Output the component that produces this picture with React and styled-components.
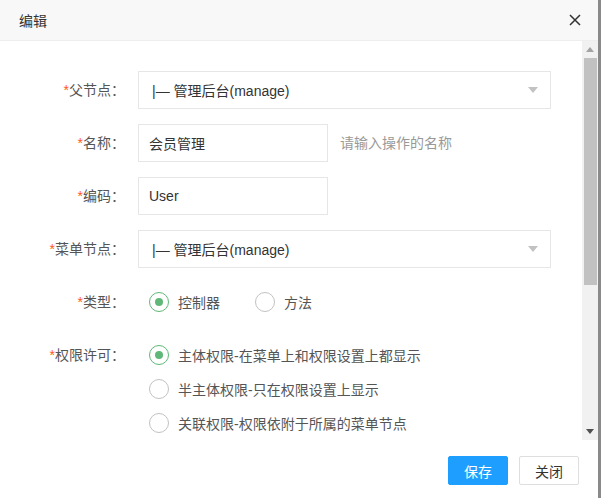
import React from 'react';
import styled, { createGlobalStyle } from 'styled-components';

const GlobalStyle = createGlobalStyle`
  html, body {
    margin: 0;
    padding: 0;
    background: #8a8a8a;
  }
  * {
    box-sizing: border-box;
  }
`;

const Dialog = styled.div`
  width: 598px;
  height: 498px;
  background: #fff;
  display: flex;
  flex-direction: column;
  font-family: "Liberation Sans", "Noto Sans CJK SC", sans-serif;
  font-size: 14px;
  color: #333;
`;

const Header = styled.div`
  height: 41px;
  flex: none;
  background: #f8f8f8;
  border-bottom: 1px solid #eee;
  display: flex;
  align-items: center;
  justify-content: space-between;
  padding: 0 16px 0 19px;
`;

const Title = styled.span`
  font-size: 14px;
  color: #333;
`;

const CloseButton = styled.button`
  border: 0;
  background: none;
  padding: 0;
  width: 14px;
  height: 14px;
  display: flex;
  align-items: center;
  justify-content: center;
  cursor: pointer;
`;

const Body = styled.div`
  height: 399px;
  flex: none;
  display: flex;
`;

const Content = styled.div`
  flex: 1;
  overflow: hidden;
  padding: 30px 31px 0 0;
`;

const ScrollBar = styled.div`
  width: 16px;
  flex: none;
  background: #f1f1f1;
  display: flex;
  flex-direction: column;
`;

const ScrollButton = styled.div`
  height: 17px;
  flex: none;
  display: flex;
  align-items: center;
  justify-content: center;
`;

const ScrollTrack = styled.div`
  flex: 1;
  padding: 0 1px 0 2px;
`;

const Thumb = styled.div`
  height: 227px;
  background: #c1c1c1;
`;

const FormItem = styled.div`
  display: flex;
  align-items: flex-start;
  margin-bottom: 15px;
`;

const Label = styled.label`
  width: 125px;
  flex: none;
  margin-right: 13px;
  padding: 9px 0;
  line-height: 20px;
  text-align: right;
  color: #555;
  font-size: 14px;
`;

const Star = styled.span`
  color: #ff5722;
`;

const Field = styled.div`
  height: 38px;
  width: ${p => (p.$wide ? '413px' : '190px')};
  border: 1px solid #e6e6e6;
  background: #fff;
  display: flex;
  align-items: center;
  padding-left: ${p => (p.$select ? '13px' : '10px')};
  padding-right: 12px;
  color: #333;
  font-size: 14px;
`;

const FieldText = styled.span`
  flex: 1;
  white-space: nowrap;
`;

const Caret = styled.i`
  width: 0;
  height: 0;
  border-left: 5px solid transparent;
  border-right: 5px solid transparent;
  border-top: 6px solid #c2c2c2;
`;

const Hint = styled.span`
  margin-left: 12px;
  line-height: 38px;
  color: #999;
  font-size: 14px;
`;

const RadioRow = styled.div`
  display: flex;
  align-items: center;
  height: 38px;
  padding-left: 11px;
  gap: 35px;
`;

const RadioColumn = styled.div`
  display: flex;
  flex-direction: column;
  gap: 4px;
  padding-top: 4px;
  padding-left: 11px;
`;

const Radio = styled.div`
  display: flex;
  align-items: center;
  height: 30px;
  gap: 9px;
  color: #555;
  font-size: 14px;
  cursor: pointer;
`;

const RadioIcon = styled.span`
  width: 20px;
  height: 20px;
  border-radius: 50%;
  border: 1.5px solid ${p => (p.$checked ? '#5fb878' : '#c2c2c2')};
  display: flex;
  align-items: center;
  justify-content: center;

  &::after {
    content: '';
    display: ${p => (p.$checked ? 'block' : 'none')};
    width: 8px;
    height: 8px;
    border-radius: 50%;
    background: #5fb878;
  }
`;

const Footer = styled.div`
  flex: 1;
  display: flex;
  justify-content: flex-end;
  align-items: flex-start;
  gap: 11px;
  padding: 16px 19px 0 0;
`;

const Button = styled.button`
  height: 29px;
  padding: 0 15px;
  border-radius: 2px;
  font-family: "Liberation Sans", "Noto Sans CJK SC", sans-serif;
  font-size: 14px;
  cursor: pointer;
  border: 1px solid ${p => (p.$primary ? '#1e9fff' : '#dedede')};
  background: ${p => (p.$primary ? '#1e9fff' : '#fff')};
  color: ${p => (p.$primary ? '#fff' : '#333')};
`;

function RadioOption({ checked, children }) {
  return (
    <Radio>
      <RadioIcon $checked={checked} />
      <span>{children}</span>
    </Radio>
  );
}

function ReqLabel({ children }) {
  return (
    <Label>
      <Star>*</Star>
      {children}：
    </Label>
  );
}

export default function App() {
  return (
    <>
      <GlobalStyle />
      <Dialog>
        <Header>
          <Title>编辑</Title>
          <CloseButton aria-label="关闭">
            <svg width="12" height="12" viewBox="0 0 12 12">
              <path d="M1 1 L11 11 M11 1 L1 11" stroke="#333" strokeWidth="1.5" />
            </svg>
          </CloseButton>
        </Header>
        <Body>
          <Content>
            <FormItem>
              <ReqLabel>父节点</ReqLabel>
              <Field $wide $select>
                <FieldText>|— 管理后台(manage)</FieldText>
                <Caret />
              </Field>
            </FormItem>
            <FormItem>
              <ReqLabel>名称</ReqLabel>
              <Field>
                <FieldText>会员管理</FieldText>
              </Field>
              <Hint>请输入操作的名称</Hint>
            </FormItem>
            <FormItem>
              <ReqLabel>编码</ReqLabel>
              <Field>
                <FieldText>User</FieldText>
              </Field>
            </FormItem>
            <FormItem>
              <ReqLabel>菜单节点</ReqLabel>
              <Field $wide $select>
                <FieldText>|— 管理后台(manage)</FieldText>
                <Caret />
              </Field>
            </FormItem>
            <FormItem>
              <ReqLabel>类型</ReqLabel>
              <RadioRow>
                <RadioOption checked>控制器</RadioOption>
                <RadioOption>方法</RadioOption>
              </RadioRow>
            </FormItem>
            <FormItem>
              <ReqLabel>权限许可</ReqLabel>
              <RadioColumn>
                <RadioOption checked>主体权限-在菜单上和权限设置上都显示</RadioOption>
                <RadioOption>半主体权限-只在权限设置上显示</RadioOption>
                <RadioOption>关联权限-权限依附于所属的菜单节点</RadioOption>
              </RadioColumn>
            </FormItem>
          </Content>
          <ScrollBar>
            <ScrollButton>
              <svg width="8" height="5" viewBox="0 0 8 5">
                <polygon points="0,5 8,5 4,0" fill="#a3a3a3" />
              </svg>
            </ScrollButton>
            <ScrollTrack>
              <Thumb />
            </ScrollTrack>
            <ScrollButton>
              <svg width="8" height="5" viewBox="0 0 8 5">
                <polygon points="0,0 8,0 4,5" fill="#505050" />
              </svg>
            </ScrollButton>
          </ScrollBar>
        </Body>
        <Footer>
          <Button $primary>保存</Button>
          <Button>关闭</Button>
        </Footer>
      </Dialog>
    </>
  );
}
